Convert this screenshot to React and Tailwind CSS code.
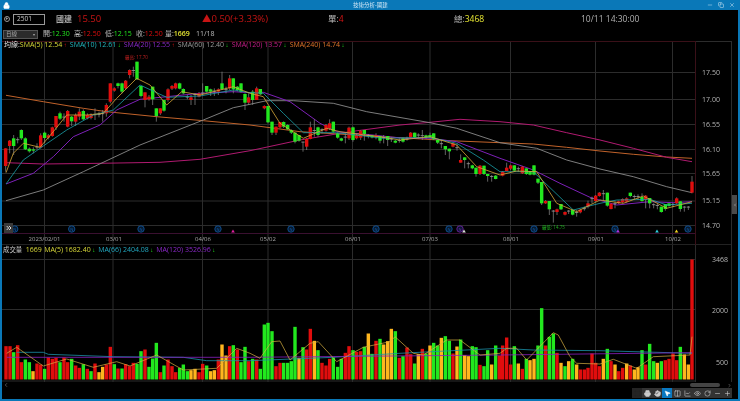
import React from "react";
import { Lock, Minus, Plus, Square, X, Printer, Hand, MousePointer2, Eye, RotateCw, Columns2, ChartLine, Copy, ChevronLeft, ChevronRight, ChevronsRight } from "lucide-react";

const seg = (off, s) => s.trim().split(/\s+/).map((t) => {
  const [x, top, bot, wt, wb, c] = t.split(",");
  return { x: off + +x / 3, top: 60 + +top / 3, bot: 60 + +bot / 3, wt: 60 + +wt / 3, wb: 60 + +wb / 3, c };
});
const candles = [
  ...seg(0, `17,265,318,265,335,r 29,242,258,240,280,r 41,235,258,225,285,g 53,238,241,232,250,d 64,210,235,208,240,g 76,235,268,232,270,g 88,266,274,262,278,g 100,268,272,262,280,g 111,260,264,250,268,d 122,226,262,220,265,r 134,218,234,215,250,g 145,226,233,222,238,r 157,202,228,200,230,r 168,168,202,168,210,r 180,160,176,155,180,g 192,170,173,160,185,d 203,153,200,150,202,r 215,170,184,168,198,g 227,165,185,160,198,r 238,155,170,145,180,r 250,153,178,148,180,g 262,165,175,160,178,r 273,165,174,160,178,r 285,163,166,145,180,d 297,162,165,155,172,d 308,160,163,150,185,d 319,135,160,130,170,r 331,70,125,70,130,r 343,85,92,82,95,r 354,70,78,68,85,g 366,70,95,68,100,g 377,62,85,60,88,r 389,30,45,28,55,r 400,30,33,20,50,d 411,5,58,5,60,g 423,78,108,78,112,g 435,97,120,97,142,r 447,110,118,105,122,r 458,80,118,80,135,g 469,145,168,145,185,g 481,145,160,145,165,r 492,120,152,120,155,g 504,88,120,85,125,r 516,78,86,75,90,r 527,70,85,68,88,r 539,70,86,68,88,g 550,87,100,85,103,g 562,110,112,105,118,d 573,112,120,105,135,r 585,102,122,100,135,d 597,100,110,96,112,r 608,98,101,70,105,d 620,78,95,78,98,g 632,88,95,86,108,g 643,92,95,85,108,d 655,88,95,85,105,r 666,70,88,35,90,g 678,88,91,80,100,d 689,55,85,45,90,r 700,55,88,55,100,g 712,80,90,78,94,g 723,70,95,70,98,g 735,102,128,100,150,g 746,112,128,100,135,r`),
  ...seg(250, `8,95,120,90,135,g 20,85,120,80,120,r 31,87,103,87,105,g 43,138,145,136,148,r 54,138,187,138,190,g 66,185,218,185,225,g 78,200,218,200,225,r 90,186,202,186,205,r 101,186,200,184,204,g 113,195,208,193,210,g 124,210,218,208,222,g 135,218,245,218,250,g 147,225,242,225,245,g 159,245,248,245,275,d 170,237,260,235,270,r 181,202,237,185,238,r 193,210,213,178,230,d 204,202,225,200,230,g 216,208,211,205,220,d 228,195,212,192,215,r 239,190,205,178,210,r 250,185,215,185,218,g 263,220,233,218,236,g 274,235,242,233,244,g 286,230,233,220,250,d 297,203,235,200,240,r 309,202,240,200,245,g 320,225,235,222,238,r 332,212,233,210,240,r 343,210,222,210,242,g 355,226,229,222,235,d 366,226,232,225,235,g 378,226,232,220,238,r 390,228,242,228,250,g 401,232,235,225,250,d 413,228,240,228,258,g 424,236,239,232,246,d 436,242,248,240,250,g 448,240,243,235,248,d 459,235,245,233,248,g 471,236,239,230,242,d 482,218,233,216,235,r 494,218,232,218,234,g 505,224,227,220,235,d 517,226,229,210,240,d 528,226,233,224,236,g 540,225,233,218,235,g 551,220,238,220,240,g 563,240,248,240,252,g 574,250,253,240,265,d 586,258,268,258,285,g 598,266,274,266,298,g 609,250,260,248,262,r 621,262,265,250,272,d 632,300,308,283,308,r 644,292,300,292,325,g 655,310,313,305,325,d 667,316,325,314,328,g 678,323,342,323,350,g 690,317,342,315,345,r 702,317,342,317,345,g 713,342,348,342,365,g 725,348,351,345,365,d 737,347,357,345,358,g`),
  ...seg(500, `8,335,347,333,349,r 20,323,333,308,333,r 32,316,326,314,330,r 43,316,332,316,334,g 55,325,328,320,335,d 67,320,340,318,342,r 79,325,342,325,345,g 90,333,344,333,346,g 102,316,344,316,346,g 114,356,368,356,372,g 125,366,430,366,435,g 137,423,430,420,432,r 148,423,448,423,465,g 160,452,455,450,488,d 171,448,456,446,465,r 183,432,448,432,450,g 195,456,464,454,466,r 206,452,455,450,462,d 218,449,464,449,466,g 230,456,459,450,470,d 241,449,457,447,460,r 253,445,448,440,452,d 264,430,440,422,445,r 276,415,418,410,430,d 287,407,423,405,425,r 298,398,408,396,410,r 310,400,403,390,420,d 322,398,437,398,440,g 333,431,447,431,448,r 345,430,433,425,445,d 356,424,430,422,432,r 368,417,427,415,430,r 380,415,425,412,428,r 391,398,408,398,412,g 403,408,411,404,418,d 414,408,411,403,420,d 426,411,423,400,425,g 437,407,420,405,445,r 449,414,430,414,445,g 461,433,436,430,445,d 472,435,438,432,448,d 484,440,456,440,458,g 496,432,447,432,452,g 507,430,438,430,440,g 519,432,435,428,442,d 530,415,430,412,432,r 541,424,447,424,455,g 553,440,443,438,455,d 565,440,443,438,450,d 576,365,398,348,400,r`),
];

const vseg = (off, s) => s.trim().split(/\s+/).map((t) => {
  const [x, c, h] = t.split(",");
  return { x: off + +x / 3, c, h: +h / 3 };
});
const vols = [
  ...vseg(0, `18,r,100 30,r,100 41,g,82 53,r,103 64,r,52 76,g,60 88,g,52 99,y,25 111,r,48 122,r,45 134,g,32 145,r,66 157,r,62 168,r,65 180,g,52 192,r,66 203,r,52 215,g,62 227,r,42 238,r,35 250,g,46 262,r,32 273,g,25 285,r,48 297,y,22 308,y,38 319,r,45 331,r,98 343,g,46 354,r,33 366,g,33 377,r,46 389,r,40 400,r,50 411,g,47 423,g,85 435,r,90 447,g,38 458,g,63 469,g,110 481,r,22 492,g,42 504,r,60 516,r,40 527,r,22 539,g,35 550,g,45 562,g,25 573,y,28 585,y,32 597,r,22 608,r,47 620,g,42 632,y,25 643,y,28 655,r,60 666,y,105 678,y,72 689,r,100 700,g,103 712,r,90 723,g,52 735,g,98 746,r,55`),
  ...vseg(250, `8,g,62 20,r,60 31,g,32 43,g,165 54,g,170 66,g,145 78,r,40 90,r,50 101,g,50 113,g,50 124,g,55 135,g,158 147,y,65 159,g,97 170,r,90 181,r,152 193,y,116 204,g,88 216,r,50 228,r,42 239,r,62 250,g,66 263,g,38 274,g,62 286,r,80 297,r,100 309,g,88 320,r,83 332,r,85 343,g,98 355,y,138 366,g,77 378,r,116 390,g,122 401,y,105 413,y,115 424,y,152 436,g,145 448,r,65 459,g,70 471,r,96 482,r,76 494,g,48 505,y,76 517,r,92 528,g,78 540,y,102 551,g,110 563,g,102 574,y,125 586,g,130 598,g,116 609,r,78 621,y,99 632,g,120 644,y,73 655,y,70 667,g,100 678,g,97 690,r,44 702,g,40 713,g,88 725,y,45 737,g,102 748,r,72`),
  ...vseg(500, `8,r,102 20,r,126 32,r,45 43,g,100 55,y,48 67,r,32 79,g,62 90,y,58 102,y,62 114,g,102 125,g,214 137,r,102 148,g,128 160,g,138 171,r,80 183,y,50 195,g,40 206,y,55 218,g,62 230,y,45 241,r,30 253,r,30 264,r,35 276,r,78 287,r,50 298,r,40 310,y,62 322,g,92 333,r,55 345,y,45 356,r,25 368,r,35 380,y,48 391,r,42 403,y,30 414,y,37 426,g,88 437,r,45 449,g,107 461,g,55 472,y,50 484,g,55 496,r,58 507,r,62 519,r,78 530,r,58 541,g,98 553,y,75 565,y,45 576,r,360`),
];

const pts = (groups, oy) => groups.map(([off, arr]) => arr.map(([x, y]) => `${(off + x / 3).toFixed(1)},${(oy + y / 3).toFixed(1)}`).join(" ")).join(" ");

const ma240 = pts([[0, [[18,106],[130,125],[250,145],[320,155],[470,170],[610,182],[750,195]]], [250, [[150,215],[600,242],[750,248]]], [500, [[100,252],[200,262],[300,273],[400,283],[500,291],[576,295]]]], 60);
const ma120 = pts([[0, [[18,308],[130,312],[300,310],[480,307],[600,298],[750,272]]], [250, [[150,240],[300,215],[450,195],[540,187],[630,178],[750,185]]], [500, [[100,195],[200,218],[300,240],[400,265],[500,292],[576,305]]]], 60);
const ma60 = pts([[0, [[18,422],[130,390],[250,335],[420,255],[610,180],[700,143],[750,133]]], [250, [[50,122],[130,122],[250,130],[350,155],[540,188],[620,205],[750,248]]], [500, [[110,265],[200,300],[300,327],[400,350],[500,380],[576,398]]]], 60);
const ma20 = pts([[0, [[18,372],[100,340],[160,290],[220,230],[300,195],[350,150],[420,118],[500,110],[600,100],[700,95],[750,98]]], [250, [[40,97],[120,125],[210,190],[260,215],[340,222],[460,235],[540,235],[620,245],[750,295]]], [500, [[100,330],[180,370],[270,412],[350,435],[450,425],[520,428],[576,425]]]], 60);
const ma10 = pts([[0, [[18,372],[70,300],[130,258],[200,210],[280,165],[340,150],[420,75],[500,112],[600,108],[700,90],[750,98]]], [250, [[40,100],[100,160],[160,218],[260,218],[400,235],[540,232],[620,250],[700,300],[750,335]]], [500, [[100,335],[220,450],[300,430],[350,420],[450,418],[500,435],[576,430]]]], 60);
const ma5 = pts([[0, [[18,338],[40,280],[70,250],[120,262],[160,215],[200,165],[260,165],[310,160],[350,115],[410,55],[450,75],[500,135],[545,95],[600,105],[700,80],[750,100]]], [250, [[40,110],[90,190],[160,235],[230,205],[270,215],[400,232],[450,240],[540,230],[620,255],[680,320],[750,345]]], [500, [[50,333],[110,335],[170,430],[230,455],[300,420],[370,430],[430,408],[500,445],[576,425]]]], 60);

const vTeal = pts([[0, [[50,337],[130,337],[145,343],[340,350],[550,352],[620,362],[750,362]]], [250, [[250,352],[450,340],[750,325]]], [500, [[100,330],[300,332],[576,340]]]], 240);
const vPurple = pts([[0, [[20,352],[750,352]]], [250, [[750,345]]], [500, [[576,338]]]], 240);
const vMa5 = pts([[0, [[20,340],[50,322],[130,378],[200,357],[280,382],[350,365],[390,378],[470,345],[550,390],[650,385],[710,325],[750,340]]], [250, [[30,355],[65,305],[90,303],[120,360],[180,310],[205,305],[260,365],[340,322],[420,305],[435,290],[490,340],[520,345],[590,300],[630,300],[690,345],[750,340]]], [500, [[20,325],[50,325],[80,360],[160,278],[175,285],[210,350],[230,370],[300,372],[340,358],[410,385],[460,350],[570,345],[576,290]]]], 240);

const vx = [44.5, 113, 202.5, 268, 352.5, 430, 510.5, 595.5, 672.5];
const hy = [72.5, 99.5, 124.5, 149.5, 173.5, 201, 225.5];
const prices = ["17.50", "17.00", "16.55", "16.10", "15.65", "15.15", "14.70"];
const dates = [[44.5, "2023/02/01"], [114, "03/01"], [203, "04/06"], [268, "05/02"], [353, "06/01"], [430, "07/03"], [511, "08/01"], [596, "09/01"], [673, "10/02"]];
const col = { r: "#e00d0d", g: "#22e81e", y: "#ffb61e" };
const circles = [[14.7, "#0f5aa8"], [71.7, "#0f5aa8"], [141, "#0f5aa8"], [218, "#0f5aa8"], [291, "#0f5aa8"], [376, "#0f5aa8"], [449, "#0f5aa8"], [460, "#7a1fb0"], [534, "#0f5aa8"], [615, "#0f5aa8"], [688, "#0f5aa8"]];
const tris = [[233, "#e020a0"], [464, "#dddddd"], [618, "#b030e0"], [657, "#30d0e0"], [676.5, "#f0d020"]];
const font = { fontFamily: '"Open Sans","Noto Sans CJK TC",sans-serif' };

function Legend({ color, label, arrow, up }) {
  return (
    <span className={color}>
      {label}
      <span className={`inline-block w-[3.5px] ml-[1.5px] text-[6px] font-['Liberation_Sans',sans-serif] ${up ? "text-[#e00d0d]" : "text-[#22e81e]"}`}>{arrow}</span>
    </span>
  );
}

const tools = [Square, Printer, Hand, MousePointer2, Columns2, ChartLine, Eye, RotateCw, Minus, Plus];

export default function App() {
  return (
    <div className="relative w-[740px] h-[401px] bg-black border-x-2 border-b-2 border-[#0a78b8] flex flex-col overflow-hidden text-[#bdbdbd] blur-[0.3px] font-['Open_Sans','Noto_Sans_CJK_TC',sans-serif]">
      <div className="relative h-[10px] shrink-0 bg-[#0a78b8] -mx-[2px] flex items-center justify-between px-[3px] text-[#cfe6f5]">
        <Lock size={7} className="text-white" fill="white" />
        <span className="absolute left-[353px] top-[-1px] text-[5.5px] leading-[12px]">技術分析-國建</span>
        <div className="flex gap-[5px] pr-[2px] items-center">
          <Minus size={6} /><Copy size={6} /><X size={6} />
        </div>
      </div>

      <div className="h-[18px] shrink-0 flex items-center relative text-[9px]">
        <span className="ml-[2px] w-[6px] h-[6px] rounded-full border border-[#999] flex items-center justify-center text-[3px] text-[#999]">▶</span>
        <span className="ml-[3px] w-[32px] h-[11px] border border-[#999] flex items-center pl-[3px] text-[6.5px] text-[#ccc]">2501</span>
        <span className="ml-[11px] w-[21px] font-bold text-[#aaa] text-[8px]">國建</span>
        <span className="text-[#c81414] text-[9.5px] w-[125px]">15.50</span>
        <span className="text-[#c81414] text-[9.5px] w-[126px]">▲0.50(+3.33%)</span>
        <span className="w-[126px] text-[8.5px]">單:<span className="text-[#d81414]">4</span></span>
        <span className="w-[127px] text-[8.5px]">總:<span className="text-[#e6e632]">3468</span></span>
        <span className="text-[8.5px] text-[#b0b0b0]">10/11 14:30:00</span>
      </div>

      <div className="h-[13px] shrink-0 flex items-center text-[7px]">
        <span className="ml-[1px] w-[35px] h-[9px] bg-[#2b2b2b] border border-[#555] flex items-center justify-between px-[2px] text-[5.5px] text-[#aaa]">日線<span className="text-[4px]">▾</span></span>
        <span className="ml-[5px] w-[31px]">開:<span className="text-[#22e81e]">12.30</span></span>
        <span className="w-[31px]">高:<span className="text-[#e00d0d]">12.50</span></span>
        <span className="w-[31px]">低:<span className="text-[#22e81e]">12.15</span></span>
        <span className="w-[29px]">收:<span className="text-[#e00d0d]">12.50</span></span>
        <span className="w-[31px]">量:<span className="text-[#e6e632] font-semibold">1669</span></span>
        <span className="text-[#bbb]">11/18</span>
      </div>

      <div className="relative h-[204px] shrink-0">
        <svg width="736" height="204" viewBox="2 41 736 204" className="block" style={font}>
          {hy.map((y) => <line key={y} x1="2" x2="696" y1={y} y2={y} stroke="#2c2c2c" strokeWidth="1" />)}
          {vx.map((x) => <line key={x} x1={x} x2={x} y1="41" y2="245" stroke="#2c2c2c" strokeWidth="1" />)}
          <line x1="2" x2="696" y1="41.5" y2="41.5" stroke="#3a1018" />
          <line x1="696" x2="732" y1="41.5" y2="41.5" stroke="#2c2c2c" />
          <line x1="2" x2="696" y1="233.5" y2="233.5" stroke="#3a1030" />
          <line x1="2" x2="732" y1="244.5" y2="244.5" stroke="#222" />
          <line x1="695.5" x2="695.5" y1="41" y2="245" stroke="#3a1018" />
          <line x1="731.5" x2="731.5" y1="41" y2="245" stroke="#2c2c2c" />
          {prices.map((p, i) => <text key={p} x="711" y={hy[i] + 2.4} fontSize="7" fill="#b5b5b5" textAnchor="middle">{p}</text>)}
          {dates.map(([x, d]) => <text key={d} x={x} y="240.5" fontSize="6" fill="#a5a5a5" textAnchor="middle">{d}</text>)}
          <polyline points={ma240} fill="none" stroke="#c0622a" strokeWidth="1" />
          <polyline points={ma120} fill="none" stroke="#b01a70" strokeWidth="1" />
          <polyline points={ma60} fill="none" stroke="#8a8a8a" strokeWidth="0.9" />
          <polyline points={ma20} fill="none" stroke="#7d20b8" strokeWidth="1" />
          {candles.map((k, i) => (
            <g key={i}>
              <line x1={k.x} x2={k.x} y1={k.wt} y2={k.wb} stroke="#8c8c8c" strokeWidth="0.7" />
              {k.c !== "d" && <rect x={k.x - 1.7} y={k.top} width="3.4" height={k.bot - k.top} fill={col[k.c]} />}
              {k.c === "d" && <rect x={k.x - 1.7} y={k.top} width="3.4" height="0.8" fill="#9a9a9a" />}
            </g>
          ))}
          <polyline points={ma10} fill="none" stroke="#1aa0a8" strokeWidth="0.8" />
          <polyline points={ma5} fill="none" stroke="#d8a838" strokeWidth="0.8" />
          <text x="125" y="59" fontSize="4.5" fill="#c02020">最高: 17.70</text>
          <text x="542" y="229" fontSize="4.5" fill="#20b020">最低: 14.75</text>
          {circles.map(([x, c]) => (
            <g key={x}>
              <circle cx={x} cy="229" r="3.2" fill="#06182c" stroke={c} strokeWidth="0.8" />
              <text x={x} y="230.6" fontSize="4" fill={c} textAnchor="middle">N</text>
            </g>
          ))}
          {tris.map(([x, c]) => <polygon key={x} points={`${x - 1.8},232.5 ${x + 1.8},232.5 ${x},229.5`} fill={c} />)}
        </svg>

        <div className="absolute left-[2px] top-[-1px] whitespace-nowrap text-[7px] leading-[10px] flex gap-[2.6px]">
          <span className="text-[#ddd]">均線:<Legend color="text-[#d8d838]" label="SMA(5) 12.54" arrow="↑" up /></span>
          <Legend color="text-[#22b8c0]" label="SMA(10) 12.61" arrow="↓" />
          <Legend color="text-[#8a28c8]" label="SMA(20) 12.55" arrow="↑" up />
          <Legend color="text-[#9a9a9a]" label="SMA(60) 12.40" arrow="↓" />
          <Legend color="text-[#c81e8a]" label="SMA(120) 13.57" arrow="↓" />
          <Legend color="text-[#e0742a]" label="SMA(240) 14.74" arrow="↓" />
        </div>

        <div className="absolute left-[2px] top-[182px] w-[9px] h-[10px] bg-[#3a3a3a] flex items-center justify-center text-[#ddd]">
          <ChevronsRight size={8} strokeWidth={3} />
        </div>
        <div className="absolute left-[730px] top-[154px] w-[5px] h-[19px] bg-[#4a4a4a] flex items-center justify-center text-[#ccc]">
          <ChevronLeft size={4} strokeWidth={3} />
        </div>
      </div>

      <div className="relative h-[137px] shrink-0">
        <svg width="736" height="137" viewBox="2 245 736 137" className="block" style={font}>
          <line x1="2" x2="696" y1="259.5" y2="259.5" stroke="#2c2c2c" />
          <line x1="2" x2="696" y1="309.5" y2="309.5" stroke="#2c2c2c" />
          <line x1="2" x2="696" y1="381" y2="381" stroke="#2c2c2c" />
          {vx.map((x) => <line key={x} x1={x} x2={x} y1="245" y2="382" stroke="#2c2c2c" />)}
          <line x1="695.5" x2="695.5" y1="245" y2="382" stroke="#2a2a2a" />
          <line x1="731.5" x2="731.5" y1="245" y2="382" stroke="#2c2c2c" />
          <text x="720" y="262" fontSize="7" fill="#b5b5b5" textAnchor="middle">3468</text>
          <text x="720" y="312.5" fontSize="7" fill="#b5b5b5" textAnchor="middle">2000</text>
          <text x="722" y="364.5" fontSize="7" fill="#b5b5b5" textAnchor="middle">500</text>
          {vols.map((v, i) => <rect key={i} x={v.x - 1.7} y={379.5 - v.h} width="3.4" height={v.h} fill={col[v.c]} />)}
          <polyline points={vTeal} fill="none" stroke="#1a90a8" strokeWidth="0.8" />
          <polyline points={vPurple} fill="none" stroke="#8a20c0" strokeWidth="0.8" />
          <polyline points={vMa5} fill="none" stroke="#d8b040" strokeWidth="0.7" />
        </svg>
        <div className="absolute left-[1px] top-[0px] whitespace-nowrap text-[7px] leading-[10px] flex gap-[2.5px]">
          <span className="text-[#ccc] text-[6.4px]">成交量</span>
          <span className="text-[#d8d838] ml-[1px]">1669</span>
          <Legend color="text-[#d8d838]" label="MA(5) 1682.40" arrow="↓" />
          <Legend color="text-[#22a8c0]" label="MA(66) 2404.08" arrow="↓" />
          <Legend color="text-[#8a28c8]" label="MA(120) 3526.96" arrow="↓" />
        </div>
      </div>

      <div className="h-[17px] shrink-0 flex justify-between items-start">
        <ChevronLeft size={6} className="ml-[1px] text-[#999]" />
        <div className="flex flex-col items-end mr-[6px]">
          <div className="h-[6px] flex items-center gap-[7px]">
            <span className="w-[30px] h-[4px] rounded-full bg-[#444]" />
            <ChevronRight size={5} className="text-[#aaa]" />
          </div>
          <div className="flex">
            {tools.map((I, i) => (
              <span key={i} className={`w-[10px] h-[10px] flex items-center justify-center ${i === 3 ? "bg-[#0a78c0] text-white" : i === 0 ? "bg-[#242424] text-[#242424]" : "bg-[#333] text-[#ccc]"}`}>
                <I size={7} strokeWidth={2} fill={i === 1 || i === 2 || i === 3 ? "currentColor" : "none"} />
              </span>
            ))}
          </div>
        </div>
      </div>
    </div>
  );
}
